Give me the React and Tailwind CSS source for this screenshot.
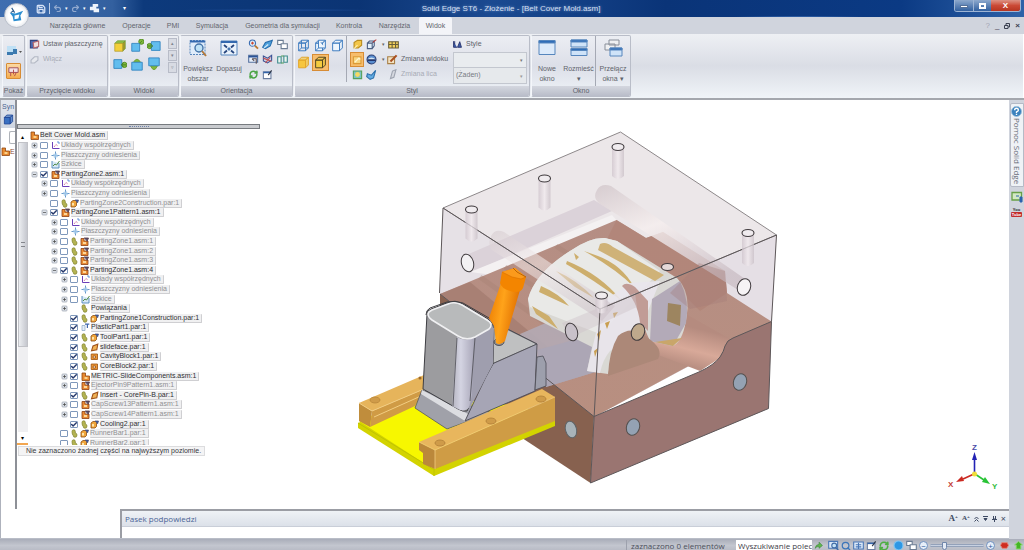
import React from 'react';
import { Check, Save, Undo2, Redo2, RefreshCw, Search } from 'lucide-react';

const INDENT = ['pl-[2px]', 'pl-[3px]', 'pl-[13px]', 'pl-[23px]', 'pl-[33px]'];

// level, label, expander, checkbox (null = none), icons, dimmed
const TREE = [
  [0, 'Belt Cover Mold.asm', '', null, ['asm'], false],
  [1, 'Układy współrzędnych', '+', false, ['axes'], true],
  [1, 'Płaszczyzny odniesienia', '+', false, ['plane'], true],
  [1, 'Szkice', '+', false, ['sketch'], true],
  [1, 'PartingZone2.asm:1', '-', true, ['sub'], false],
  [2, 'Układy współrzędnych', '+', false, ['axes'], true],
  [2, 'Płaszczyzny odniesienia', '+', false, ['plane'], true],
  [2, 'PartingZone2Construction.par:1', '', false, ['clip', 'part'], true],
  [2, 'PartingZone1Pattern1.asm:1', '-', true, ['sub'], false],
  [3, 'Układy współrzędnych', '+', false, ['axes'], true],
  [3, 'Płaszczyzny odniesienia', '+', false, ['plane'], true],
  [3, 'PartingZone1.asm:1', '+', false, ['clip', 'sub'], true],
  [3, 'PartingZone1.asm:2', '+', false, ['clip', 'sub'], true],
  [3, 'PartingZone1.asm:3', '+', false, ['clip', 'sub'], true],
  [3, 'PartingZone1.asm:4', '-', true, ['clip', 'sub'], false],
  [4, 'Układy współrzędnych', '+', false, ['axes'], true],
  [4, 'Płaszczyzny odniesienia', '+', false, ['plane'], true],
  [4, 'Szkice', '+', false, ['sketch'], true],
  [4, 'Powiązania', '+', null, ['clip'], false],
  [4, 'PartingZone1Construction.par:1', '', true, ['clip', 'part'], false],
  [4, 'PlasticPart1.par:1', '', true, ['plastic'], false],
  [4, 'ToolPart1.par:1', '', true, ['clip', 'part'], false],
  [4, 'slideface.par:1', '', true, ['clip', 'face'], false],
  [4, 'CavityBlock1.par:1', '', true, ['clip', 'block'], false],
  [4, 'CoreBlock2.par:1', '', true, ['clip', 'block'], false],
  [4, 'METRIC-SlideComponents.asm:1', '+', true, ['asm'], false],
  [4, 'EjectorPin9Pattern1.asm:1', '+', false, ['sub'], true],
  [4, 'Insert - CorePin-B.par:1', '', true, ['clip', 'face'], false],
  [4, 'CapScrew13Pattern1.asm:1', '+', false, ['sub'], true],
  [4, 'CapScrew14Pattern1.asm:1', '+', false, ['sub'], true],
  [4, 'Cooling2.par:1', '', true, ['clip', 'part'], false],
  [3, 'RunnerBar1.par:1', '', false, ['clip', 'part'], true],
  [3, 'RunnerBar2.par:1', '', false, ['clip', 'part'], true],
];

const TreeIcon = ({ type }) => {
  if (type === 'clip') {
    return (
      <svg viewBox="0 0 7 9" className="w-[7px] h-[9px] mr-[2px] shrink-0">
        <path d="M1 2.5Q1 .8 2.8.8Q4.3.8 4.3 2.5V4Q6 4.3 6 6Q6 8.3 4 8.3Q2.3 8.3 2.2 6.5L1.3 5Z" fill="#b4b452" stroke="#7c7e28" strokeWidth=".7" />
      </svg>
    );
  }
  return (
    <svg viewBox="0 0 9 9" className="w-[9px] h-[9px] shrink-0">
      {type === 'asm' && (
        <>
          <path d="M1 1H4.5V4H8.5V8.5H1Z" fill="#e8892e" stroke="#8f4611" strokeWidth=".8" />
          <path d="M3.5 5H6.5V7H3.5Z" fill="#fbd28a" />
        </>
      )}
      {type === 'sub' && (
        <>
          <path d="M1 1.5H4V4H8V8.5H1Z" fill="#ea8b34" stroke="#8c3f14" strokeWidth=".8" />
          <path d="M4 1H8.5L7 4.5" fill="#5a5672" stroke="#54303c" strokeWidth=".8" />
          <path d="M3 5H6V7H3Z" fill="#fcd79a" />
        </>
      )}
      {type === 'axes' && (
        <>
          <path d="M1.5 1V7.5H8.5" stroke="#6a3fb8" strokeWidth="1" fill="none" />
          <path d="M3 6L5 3.5L7 5" stroke="#c04b8a" strokeWidth=".8" fill="none" strokeDasharray="1.2 .6" />
          <path d="M6 1H8V3" stroke="#3c7ad0" strokeWidth=".8" fill="none" />
        </>
      )}
      {type === 'plane' && (
        <>
          <path d="M.5 4.5H8.5M4.5.5V8.5" stroke="#6597c9" strokeWidth="1" />
          <path d="M2 3L6 2.2L7 6L3 7Z" fill="#a9cdec" fillOpacity=".8" />
        </>
      )}
      {type === 'sketch' && (
        <>
          <path d="M1 1V8H8V3" fill="#d7e8f6" stroke="#4e87b8" strokeWidth=".9" />
          <path d="M2 6L4 4L5.5 5L8.5 1" stroke="#4f8a45" strokeWidth="1" fill="none" />
        </>
      )}
      {type === 'part' && (
        <>
          <path d="M1 3L3 1.5H6.5V6.5L5 8H1Z" fill="#f0a63c" stroke="#8a4d12" strokeWidth=".8" />
          <path d="M5 1H8.5L7.5 4" fill="#465ea0" stroke="#3b4778" strokeWidth=".7" />
          <path d="M2 4H4V6.5H2Z" fill="#fde3ac" />
        </>
      )}
      {type === 'plastic' && (
        <>
          <path d="M1 2.5H4V7.5H1Z" fill="#e4eef8" stroke="#8aa5c4" strokeWidth=".7" />
          <path d="M4 1.2H8.3M6.4 1.2V5" stroke="#4168ad" strokeWidth="1.2" />
        </>
      )}
      {type === 'face' && <path d="M1.5 7.8L3 3L7.8 1.2L6.8 6.8Z" fill="#f2b355" stroke="#a0541c" strokeWidth="1.1" />}
      {type === 'block' && <path d="M1.2 2H7.5V7.5H1.2ZM3.2 4V6H5.5V4Z" fill="#eb9636" fillRule="evenodd" stroke="#9a5212" strokeWidth=".8" />}
    </svg>
  );
};

const TreeRow = ({ row }) => {
  const [level, label, expander, checked, icons, dim] = row;
  return (
    <li className={`flex flex-1 min-h-0 items-center ${INDENT[level]}`}>
      {level > 0 && (
        <span className="w-[9px] shrink-0 flex">
          {expander && (
            <button aria-label={expander === '+' ? 'Rozwiń' : 'Zwiń'} className="w-[7px] h-[7px]">
              <svg viewBox="0 0 7 7" className="w-full h-full">
                <rect x="1" y="1" width="5" height="5" rx=".8" fill="#dfe3ea" stroke="#9aa0ad" strokeWidth=".7" />
                <path d={expander === '+' ? 'M2 3.5H5M3.5 2V5' : 'M2 3.5H5'} stroke="#444" strokeWidth=".7" />
              </svg>
            </button>
          )}
        </span>
      )}
      <label className="flex items-center whitespace-nowrap">
        {level > 0 && (
          <span className="relative w-[11px] h-[7px] shrink-0 flex">
            {checked !== null && (
              <>
                <input type="checkbox" defaultChecked={checked} className="peer appearance-none w-[8px] h-[7px] border border-[#7f98bb] bg-white rounded-[1px]" />
                <Check strokeWidth={5} className="hidden peer-checked:block absolute left-0 top-0 w-[8px] h-[7px] text-[#26396b] pointer-events-none" />
              </>
            )}
          </span>
        )}
        {icons.map((t) => <TreeIcon key={t} type={t} />)}
        <span className={`ml-px pr-[2px] leading-[8px] rounded-[1px] border-b border-r border-[#cfcfd2] bg-[#f0f0f1] ${dim ? 'text-[#8f8f92]' : 'text-[#2f2f33]'}`}>
          {label}
        </span>
      </label>
    </li>
  );
};

// Small ribbon pictures on a 16x16 grid
const Cube = ({ fill = 'none', stroke = '#3f7cc0', hidden = false, className = 'w-[13px] h-[13px]' }) => (
  <svg viewBox="0 0 16 16" className={className} fill={fill} stroke={stroke} strokeWidth="1.2">
    <path d="M2 5H10.5V14.5H2Z" />
    <path d="M2 5L5.5 1.5H14L10.5 5Z" fillOpacity=".6" />
    <path d="M10.5 5L14 1.5V11L10.5 14.5Z" fillOpacity=".75" />
    {hidden && <path d="M5.5 1.5V11H14M5.5 11L2 14.5" />}
  </svg>
);

const ViewIcon = ({ dir }) => {
  const dots = { top: [13, 3], left: [3, 8], right: [13, 9], up: [8, 3], down: [8, 13] };
  if (dir === 'iso') {
    return (
      <svg viewBox="0 0 16 16" className="w-[14px] h-[14px]">
        <path d="M2 5L5 2H14L11 5Z" fill="#8fc04a" stroke="#6c9a38" strokeWidth=".8" />
        <path d="M11 5L14 2V11L11 14Z" fill="#a39a2c" stroke="#6c9a38" strokeWidth=".8" />
        <path d="M2 5H11V14H2Z" fill="#f3cf3a" stroke="#b09a26" strokeWidth=".8" />
      </svg>
    );
  }
  const [x, y] = dots[dir];
  return (
    <svg viewBox="0 0 16 16" className="w-[14px] h-[14px]">
      {dir !== 'up' && dir !== 'down' && <circle cx={x} cy={y} r="3" fill="#80b83c" stroke="#4e8a21" />}
      {(dir === 'up' || dir === 'down') && <path d={dir === 'up' ? 'M4 6Q8-1 12 6Z' : 'M4 10Q8 19 12 10Z'} fill="#80b83c" stroke="#6f9e30" />}
      <path
        d={{ top: 'M2 5H11V14H2Z', left: 'M5 3H15V13H5Z', right: 'M1 3H10V13H1Z', up: 'M2 6H14V15H2Z', down: 'M2 1H14V10H2Z' }[dir]}
        fill="#62bdee" stroke="#3183c0" strokeWidth="1"
      />
      {dir === 'top' && <path d="M11 5L14 2" stroke="#4e8a21" />}
      {dir === 'left' && <path d="M1 8H6M4 5.5L6.5 8L4 10.5" stroke="#437c1c" fill="none" />}
      {dir === 'right' && <path d="M15 9H10M12 6.5L9.5 9L12 11.5" stroke="#437c1c" fill="none" />}
    </svg>
  );
};

const MiniIcon = ({ type, className = 'w-[11px] h-[11px]' }) => (
  <svg viewBox="0 0 16 16" className={className} fill="none" strokeWidth="1.6">
    {type === 'zoom' && <><circle cx="6.5" cy="6" r="4.5" fill="#d9ecfb" stroke="#3c6eb2" /><path d="M10 9.5L14.5 14" stroke="#b9762d" strokeWidth="2.6" /><path d="M4.5 6H8.5M6.5 4V8" stroke="#cf4630" /></>}
    {type === 'pan' && <><path d="M1 12L5 5L15 2L12 10L5 14Z" fill="#4fa2de" stroke="#286ead" /><path d="M3 13L9 8" stroke="#d9edf9" /></>}
    {type === 'windows' && <><path d="M1 2H9V8H1Z" fill="#fff" stroke="#6b7c93" /><path d="M6 7H15V14H6Z" fill="#fff" stroke="#6b7c93" /></>}
    {type === 'prev' && <><path d="M1 2H14V12H1Z" fill="#e8f0fa" stroke="#55719f" /><path d="M1 4H14" stroke="#2a5398" strokeWidth="2" /><path d="M6 7H12V14M6 7L9 10" stroke="#5a4f55" /></>}
    {type === 'lens' && <><path d="M1 2H14V12H1Z" fill="#dce9f8" stroke="#4977b7" /><circle cx="9" cy="8" r="3.5" fill="#c4e1f6" stroke="#3f6ba5" /><path d="M11.5 11L15 15" stroke="#3f6ba5" strokeWidth="2" /></>}
    {type === 'turn' && <><path d="M2 3L8 6L14 2V9L8 13L2 10Z" fill="#cfd5e6" stroke="#3c5396" /><path d="M2 6L14 11M5 13L12 5" stroke="#c15256" /></>}
    {type === 'rotate' && <><path d="M1 4H6V13H1ZM10 3H15V12H10Z" fill="#eaf5ef" stroke="#3e8b8d" /><path d="M6 3H10M6 13H10" stroke="#4f9b57" /></>}
    {type === 'table' && <><path d="M2 4H13V14H2Z" fill="#fff" stroke="#6c7ea0" /><path d="M2 5H13" stroke="#3465aa" strokeWidth="2" /><path d="M9 9L14 2" stroke="#2f3646" /></>}
    {type === 'gold' && <><path d="M3 5L8 2H14V9L9 13H3Z" fill="#f3c64a" stroke="#b98c1e" /><path d="M3 14L8 9" stroke="#fff0b4" /></>}
    {type === 'goldface' && <><path d="M2 4H13V14H2Z" fill="#f7d582" stroke="#dc9a37" /><path d="M4 12L10 6L12 8" stroke="#fff5d0" strokeWidth="2" /></>}
    {type === 'edges' && <><path d="M2 6H9V14H2ZM2 6L5 3H12M9 6L12 3V10L9 14" fill="#e2effa" stroke="#4c5f83" /><path d="M10 5L15 1" stroke="#bc3c37" /></>}
    {type === 'globe' && <><circle cx="8" cy="8" r="6.5" fill="#5a8ed0" stroke="#2a3f75" /><path d="M2 8Q8 12 14 8Q8 2 2 8" fill="#d3e5f4" /><path d="M2 9H14" stroke="#23366c" strokeWidth="2.4" /></>}
    {type === 'grid' && <><path d="M1 4H15V13H1Z" fill="#f6d35c" stroke="#695f3b" /><path d="M1 8H15M6 4V13M11 4V13" stroke="#695f3b" /></>}
    {type === 'brush' && <><path d="M1 4H11V14H1Z" fill="#f2e3c4" stroke="#a98048" /><path d="M5 11L14 2" stroke="#a94f1f" strokeWidth="3" /></>}
    {type === 'greybrush' && <path d="M5 14L8 3L13 1L10 12Z" fill="#d5d8df" stroke="#9ea4b0" />}
    {type === 'greencube' && <><path d="M2 3H14V14H2Z" fill="#7ac3c4" stroke="#55a05b" /><circle cx="8" cy="8" r="3.5" fill="#f5d960" /></>}
    {type === 'bluebrush' && <path d="M2 7L8 9L14 2L11 13L6 15L1 11Z" fill="#63ace2" stroke="#2d70ac" />}
    {type === 'plane' && <><path d="M2 2H12V13H2Z" fill="#4b67ae" stroke="#31427e" /><path d="M6 5L14 3V11L7 13Z" fill="#f0dede" stroke="#b5656b" /></>}
    {type === 'greyplane' && <path d="M3 9L8 4H13V9L8 13H3Z" fill="#e6e8ed" stroke="#b3b8c4" />}
    {type === 'style' && <><path d="M1 2V13H7M12 3L8 13H15Z" fill="#3d5ba5" stroke="#28336d" /><path d="M3 2V8" stroke="#28336d" /></>}
    {type === 'ball' && <circle cx="8" cy="8" r="6.5" fill="#2e97e4" stroke="#7cc5f4" />}
    {type === 'red' && <path d="M3 3L13 3L15 8L12 13H4L1 8Z" fill="#cf2d20" stroke="#e28377" />}
    {type === 'green' && <path d="M8 1L15 7H12V14H4V7H1Z" fill="#44b526" stroke="#86d665" />}
    {type === 'sheet' && <><path d="M1 3H15V13H1Z" fill="#dce9f8" stroke="#4977b7" /><path d="M4 7H12M4 10H12M8 4V13" stroke="#4977b7" /></>}
    {type === 'arrow' && <path d="M2 13Q3 6 9 6V2L15 8L9 13V10Q5 9 2 13Z" fill="#60b64d" stroke="#36833a" strokeWidth="1" />}
  </svg>
);

const WindowIcon = ({ type }) => (
  <svg viewBox="0 0 20 18" className="w-[20px] h-[18px] shrink-0" stroke="#5686bd">
    {type === 'one' && <><path d="M2 1.5H18V15.5H2Z" fill="#dceafa" /><path d="M2 1.5H18V4H2Z" fill="#2f6db8" /></>}
    {type === 'split' && <><path d="M2 1H18V8H2ZM2 9.5H18V16.5H2Z" fill="#cfe3f8" /><path d="M2 1H18V3H2ZM2 9.5H18V11.5H2Z" fill="#2f6db8" /></>}
    {type === 'stack' && <><path d="M6 1H16V6H6ZM2 5H12V11H2Z" fill="#eff0f2" stroke="#888e99" /><path d="M7 9H19V17H7Z" fill="#cfe3f8" /><path d="M7 9H19V11H7Z" fill="#2f6db8" /></>}
    {type === 'area' && <><path d="M2 1.5H17V15.5H2Z" fill="#dfecfa" strokeDasharray="2 1" /><path d="M2 2.5H17" stroke="#3469af" strokeWidth="2" /><circle cx="11" cy="9" r="4" fill="#bfe2f6" stroke="#4473a8" strokeWidth="1.4" /><path d="M14 12L18 17" stroke="#b37a3d" strokeWidth="2" /></>}
    {type === 'fit' && <><path d="M2 2H18V16H2Z" fill="#eaf2fb" /><path d="M2 3H18" stroke="#3469af" strokeWidth="2" /><path d="M5 6L8 8.500M15 6L12 8.500M5 14L8 11.500M15 14L12 11.500" stroke="#27467e" strokeWidth="1.8" /><path d="M9 9H11V11H9Z" fill="#27467e" /></>}
  </svg>
);

const Group = ({ title, className, children }) => (
  <section className={`flex flex-col shrink-0 rounded-[2px] border border-[#b9bdc8] border-l-[#f4f6fa] overflow-hidden bg-linear-to-b from-[#eceef3] via-[#dcdfe8] to-[#eff3f7] ${className}`}>
    <div className="flex flex-1 min-h-0">{children}</div>
    <h2 className="h-[10px] leading-[9px] text-center whitespace-nowrap text-[#60636c] bg-linear-to-b from-[#d4d7df] to-[#b9bdc9]">{title}</h2>
  </section>
);

const BigButton = ({ icon, lines, className }) => (
  <button className={`flex flex-col items-center pt-[3px] leading-[10px] text-[#60636b] whitespace-nowrap ${className}`}>
    <WindowIcon type={icon} />
    <span className="mt-[7px]">{lines[0]}</span>
    <span>{lines[1]}</span>
  </button>
);

const IconButton = ({ label, className = '', children }) => (
  <button aria-label={label} className={`flex items-center justify-center ${className}`}>{children}</button>
);

const Ribbon = () => (
  <div className="flex h-[64px] gap-px pl-[2px] py-px pr-1 border-r border-white bg-linear-to-b from-[#eef0f4] via-[#dadde5] to-[#f0f4f8]">
    <Group title="Pokaż" className="w-[23px]">
      <div className="flex flex-col items-center gap-1 w-full pt-[7px]">
        <IconButton label="Pokaż" className="w-[18px] h-[16px]">
          <svg viewBox="0 0 18 14" className="w-[18px] h-[14px]">
            <path d="M2 2H11V9H2Z" fill="#bfe0f5" /><path d="M2 8H8V11H2ZM8 5H12V10H8Z" fill="#3c7ab0" /><path d="M14 7H17L15.500 9Z" fill="#555" />
          </svg>
        </IconButton>
        <IconButton label="Etykiety" className="w-[15px] h-[16px] rounded-[1px] border border-[#d78c35] bg-linear-to-b from-[#fbd9a3] to-[#f5ad4e]">
          <svg viewBox="0 0 14 14" className="w-[13px] h-[13px]">
            <path d="M2 3H12V8H2Z" fill="#f4e1e4" stroke="#9c4c58" /><path d="M4 8V12M7 5V10M10 8L8 12" stroke="#b34848" fill="none" />
          </svg>
        </IconButton>
      </div>
    </Group>
    <Group title="Przycięcie widoku" className="w-[82px]">
      <div className="flex flex-col gap-1 pl-[2px] pt-[3px]">
        <button className="flex items-center gap-[3px] h-[11px] text-[#60636b] whitespace-nowrap"><MiniIcon type="plane" />Ustaw płaszczyznę</button>
        <button className="flex items-center gap-[3px] h-[11px] text-[#a7abb5]"><MiniIcon type="greyplane" />Włącz</button>
      </div>
    </Group>
    <Group title="Widoki" className="w-[70px]">
      <div className="grid grid-cols-3 grid-rows-2 w-[52px] h-[36px] mt-px ml-px">
        {['iso', 'top', 'left', 'right', 'up', 'down'].map((d) => (
          <IconButton key={d} label={`Widok ${d}`}><ViewIcon dir={d} /></IconButton>
        ))}
      </div>
      <div className="ml-auto mr-px mt-[2px] flex flex-col w-[9px] h-[32px] gap-px text-[5px] text-[#80848f]">
        {['▴', '▾', '▿'].map((s) => (
          <button key={s} aria-label="Przewiń widoki" className="flex-1 leading-[9px] border border-[#b8bcc8] bg-[#d8dbe3]">{s}</button>
        ))}
      </div>
    </Group>
    <Group title="Orientacja" className="w-[113px]">
      <BigButton icon="area" lines={['Powiększ', 'obszar']} className="w-[34px]" />
      <BigButton icon="fit" lines={['Dopasuj', '']} className="w-[28px]" />
      <div className="grid grid-cols-3 auto-rows-[15px] w-[44px] ml-[3px] pt-px">
        {['zoom', 'pan', 'windows', 'prev', 'turn', 'rotate'].map((t) => (
          <IconButton key={t} label={t}><MiniIcon type={t} /></IconButton>
        ))}
        <IconButton label="Obrót"><RefreshCw strokeWidth={4} className="w-[9px] h-[9px] text-[#4ba445]" /></IconButton>
        <IconButton label="Widoki nazwane"><MiniIcon type="table" /></IconButton>
      </div>
    </Group>
    <Group title="Styl" className="w-[236px]">
      <div className="grid grid-cols-3 auto-rows-[17px] w-[52px] pt-px border-r border-[#a5a9b4] mb-1">
        <IconButton label="Krawędzie"><Cube hidden /></IconButton>
        <IconButton label="Niewidoczne krawędzie"><Cube hidden fill="#eef6fd" /></IconButton>
        <IconButton label="Widoczne krawędzie"><Cube fill="#eef6fd" /></IconButton>
        <IconButton label="Cieniowany"><Cube fill="#f7c63e" stroke="#e2a62b" /></IconButton>
        <IconButton label="Cieniowany z krawędziami" className="border border-[#d78c35] bg-[#f7bd6c]"><Cube fill="#f3cb3f" stroke="#514622" /></IconButton>
      </div>
      <div className="grid grid-cols-[14px_14px_9px] auto-rows-[15px] pt-px pl-[3px]">
        <IconButton label="Tekstury"><MiniIcon type="gold" /></IconButton>
        <IconButton label="Krawędzie modelu"><MiniIcon type="edges" /></IconButton>
        <span className="pl-[4px] text-[5px] leading-[15px] text-[#666]">▾</span>
        <IconButton label="Odbicia" className="border border-[#d78c35] bg-[#f7bd6c]"><MiniIcon type="goldface" /></IconButton>
        <IconButton label="Tło"><MiniIcon type="globe" /></IconButton>
        <span className="pl-[4px] text-[5px] leading-[15px] text-[#666]">▾</span>
        <IconButton label="Cienie"><MiniIcon type="greencube" /></IconButton>
        <IconButton label="Pędzel"><MiniIcon type="bluebrush" /></IconButton>
      </div>
      <div className="flex flex-col pt-px whitespace-nowrap">
        <IconButton label="Siatka" className="w-[13px] h-[15px]"><MiniIcon type="grid" /></IconButton>
        <button className="flex items-center gap-[3px] h-[15px] text-[#60636b]"><MiniIcon type="brush" />Zmiana widoku</button>
        <button className="flex items-center gap-[3px] h-[15px] text-[#a7abb5]"><MiniIcon type="greybrush" />Zmiana lica</button>
      </div>
      <div className="flex flex-col ml-auto mr-[2px] w-[74px] pt-px">
        <label htmlFor="style" className="flex items-center gap-[4px] h-[15px] text-[#60636b]"><MiniIcon type="style" className="w-[9px] h-[9px]" />Style</label>
        <div className="relative">
          <select id="style" className="appearance-none block w-full h-[16px] px-[2px] border border-[#c3c7cf] bg-[#e9ecef]"><option></option></select>
          <span className="absolute right-1 top-0 text-[5px] leading-[16px] text-[#777] pointer-events-none">▾</span>
        </div>
        <div className="relative">
          <select aria-label="Styl lica" className="appearance-none block w-full h-[16px] px-[2px] border border-t-0 border-[#c3c7cf] bg-[#e6e9ec] text-[#777a82]"><option>(Żaden)</option></select>
          <span className="absolute right-1 top-0 text-[5px] leading-[16px] text-[#999] pointer-events-none">▾</span>
        </div>
      </div>
    </Group>
    <Group title="Okno" className="w-[100px]">
      <BigButton icon="one" lines={['Nowe', 'okno']} className="w-[30px]" />
      <BigButton icon="split" lines={['Rozmieść', '▾']} className="w-[34px] border-r border-[#a5a9b4]" />
      <BigButton icon="stack" lines={['Przełącz', 'okna ▾']} className="w-[34px]" />
    </Group>
  </div>
);

const Hole = ({ x, y, rx = 6, ry = 3.5, len = 0 }) => (
  <g>
    {len > 0 && <path d={`M${x - rx} ${y}V${y + len}Q${x} ${y + len + 6} ${x + rx} ${y + len}V${y}Z`} fill="url(#pin)" opacity=".75" />}
    <ellipse cx={x} cy={y} rx={rx} ry={ry} fill="#f1eef0" fillOpacity=".8" stroke="#403b3e" strokeWidth="1.1" />
  </g>
);

const MoldModel = () => (
  <svg viewBox="260 99 749 409" className="block flex-1 min-w-0 h-full" preserveAspectRatio="xMidYMin meet">
    <defs>
      <linearGradient id="pin"><stop offset="0" stopColor="#cfc4cc" /><stop offset=".5" stopColor="#f1eaee" /><stop offset="1" stopColor="#c9bfc6" /></linearGradient>
      <linearGradient id="tube" x1="0" y1="0" x2=".5" y2="1"><stop offset="0" stopColor="#d3c8cc" /><stop offset=".45" stopColor="#f5eeee" /><stop offset="1" stopColor="#cdc1c8" /></linearGradient>
      <linearGradient id="orange" x1="0" x2="1" y1="0" y2=".3"><stop offset="0" stopColor="#e97800" /><stop offset=".5" stopColor="#ffa31a" /><stop offset="1" stopColor="#e06f00" /></linearGradient>
      <linearGradient id="head"><stop offset="0" stopColor="#b4b3bf" /><stop offset=".4" stopColor="#d4d4e2" /><stop offset="1" stopColor="#a9a7b9" /></linearGradient>
      <linearGradient id="dip" x1="0" y1="0" x2="-.4" y2="1"><stop offset="0" stopColor="#b58b7f" /><stop offset=".35" stopColor="#d8a999" /><stop offset=".6" stopColor="#b98f82" /><stop offset=".8" stopColor="#dcae9f" /><stop offset="1" stopColor="#b48a7d" /></linearGradient>
      <linearGradient id="brown" x1="0" y1="0" x2="0" y2="1"><stop offset="0" stopColor="#b58e84" /><stop offset="1" stopColor="#b88f80" /></linearGradient>
    </defs>

    {/* upper plate, glassy */}
    <path d="M620.500 131L776.500 234L771.500 321L594 416L440 293L443 207Z" fill="#ece7e9" />
    <path d="M443 207L600 308L594 416L440 293Z" fill="#e6e1e6" />
    <path d="M600 308L776.500 234L771.500 321L594 416Z" fill="#e5dfe5" />

    {/* cooling channels behind the cavity */}
    <path d="M464 255L594 199L612 210L470 272Z" fill="#dbd2d9" />
    <path d="M470 271L612 214L618 221L500 275Z" fill="#f4f1f2" />

    {/* lower plate */}
    <path d="M440 293L616.500 219L646 237L663 231L725 270L727 292L771.500 320.500L594 416Z" fill="url(#brown)" />
    <path d="M440 293L470 281L560 356L547 387Z" fill="#9f766a" opacity=".6" />
    <path d="M556 245L640 300M480 276L570 340M505 266L600 330" stroke="#a58073" strokeWidth="5" opacity=".35" />
    <path d="M616.500 219L646 237L663 231L725 270L727 292L700 310L650 260L600 252Z" fill="#b28578" opacity=".8" />
    <path d="M686 313L730 338L720 357L700 370L640 347Z" fill="url(#dip)" />
    <path d="M440 293L594 415.500L590.500 482L440 383Z" fill="#87614f" />
    <path d="M594 415.500L700 370.500Q714 364 720 356Q724 350 725 345Q727 339 733 337L771.500 320.500L768.500 407.500L590.500 482Z" fill="#9a7571" />

    {/* translucent slide body */}
    <path d="M520 333L562 315L607 332L602 369L546 386Z" fill="#b3a9b3" opacity=".92" />
    <path d="M537 349L603 331L602 369L546 386Z" fill="#aaa6b7" opacity=".75" />

    {/* moulded part */}
    <path d="M528 298Q535 272 570 250Q590 236 605 237L617 240L677 277Q690 290 687 312Q684 340 673 345L650 340L642 322L626 338Q612 352 608 373L587 370L592 346L530 315Z" fill="#d9d8d4" />
    <path d="M528 298Q535 272 570 250Q590 236 605 237L617 240L660 270L600 333L530 306Z" fill="#e9e9e7" />
    <path d="M600 243Q606 240 613 246L664 274L655 280L598 249Z" fill="#cfb278" />
    <path d="M584 250L598 255Q622 264 634 286Q616 268 584 250ZM567 260Q600 273 622 300Q594 279 566 263ZM556 270Q577 279 594 297L575 286ZM541 285Q560 293 569 305L539 291ZM574 252L579 256L576 259ZM532 305L549 315L558 328L536 313Z" fill="#cdae6c" />
    <path d="M604 300L630 282L660 280L640 330L610 350Q603 358 600 372L587 370L594 340Z" fill="#e9e6ec" opacity=".9" />
    <path d="M597 333L601 329L599 340ZM605 322L610 320L607 328ZM613 312L618 311L614 317ZM594 350L598 347L595 356Z" fill="#c99f51" />
    <path d="M622 285Q626 280 635 286L648 300V330L640 322Q638 300 622 285Z" fill="#c19c96" />
    <path d="M652 298L680 280Q690 300 686 322L673 345L650 340Z" fill="#b3aab8" />
    <path d="M668 302L681 304L680 325L667 320Z" fill="#9d8560" />
    <path d="M655 341L682 337L673 345Z" fill="#c9a66a" />
    <path d="M618 335Q632 323 648 337Q664 348 658 358L608 375Q609 350 618 335Z" fill="#ac8878" />
    <path d="M562 322L635 292L637 306L570 337Z" fill="#cfc3ca" opacity=".45" />

    {/* long channels */}
    <path d="M597 189Q601 182 611 185L748 280Q752 287 743 292L600 203Q592 197 597 189Z" fill="url(#tube)" opacity=".85" />
    <path d="M491 235Q495 227 504 231L615 305L602 320L492 249Q487 243 491 235Z" fill="url(#tube)" opacity=".55" />
    <path d="M699 262L725 270L727 300L690 308L670 292Z" fill="#a27a78" opacity=".35" />

    <g stroke="#5d5759" strokeWidth="1" fill="none">
      <path d="M620.500 131L776.500 234L600 308L443 207Z" stroke="#8d888a" />
      <path d="M443 207L439.500 292M776.500 234L771.500 320.500L768.500 407.500L590.500 482L600 308" />
      <path d="M440 293L594 415.500L700 370.500Q714 364 720 356Q724 350 725 345Q727 339 733 337L771.500 320.500" />
      <path d="M443 207L600 308L776.500 234" />
    </g>

    <Hole x={618} y={146} len={29} />
    <Hole x={544.5} y={177.5} len={29} />
    <Hole x={471.5} y={208.5} len={29} />
    <Hole x={748} y={232} len={30} />
    <Hole x={667.5} y={266} />
    <Hole x={601.5} y={294.5} len={15} />
    <ellipse cx="467.500" cy="262" rx="6" ry="9" transform="rotate(-15 467.500 262)" fill="#f3f1f3" stroke="#403b3e" />
    <ellipse cx="744" cy="286" rx="6.500" ry="8.500" transform="rotate(20 744 286)" fill="#f6f3f5" stroke="#403b3e" />
    <ellipse cx="571.500" cy="331" rx="6" ry="9" transform="rotate(-15 571.500 331)" fill="#c8c1c9" stroke="#403b3e" />
    <ellipse cx="638" cy="331" rx="6.500" ry="8.500" transform="rotate(20 638 331)" fill="#bfa98c" stroke="#403b3e" />
    <ellipse cx="571" cy="428.500" rx="5.500" ry="8.500" transform="rotate(-15 571 428.500)" fill="#a8b3b9" stroke="#5e6468" />
    <ellipse cx="633" cy="426" rx="6.500" ry="8.500" transform="rotate(18 633 426)" fill="#94a2b3" stroke="#54504e" />
    <ellipse cx="740" cy="381" rx="6.500" ry="8.500" transform="rotate(18 740 381)" fill="#94a2b3" stroke="#54504e" />

    {/* ejector base plate */}
    <path d="M358 422L422 395L500 405L555 417V425L434 475L358 427Z" fill="#d3d300" />
    <path d="M359 420L420 394L520 405L555 417L433 468Z" fill="#f7f700" />
    <path d="M434 468V475M358 422L433 468L555 418" stroke="#c0c400" fill="none" />

    {/* rear rail */}
    <path d="M359 402L424 374L424 388L372 410Z" fill="#e6b45b" />
    <path d="M359 402L372 410L370 426L359 420Z" fill="#c08d3c" />
    <path d="M372 410L424 388L415 405L370 426Z" fill="#d09b45" />
    <path d="M374 416L421 395M359 402L372 410L424 388" stroke="#f2cd81" fill="none" />
    <ellipse cx="375" cy="399" rx="5" ry="3" fill="#cf9b49" stroke="#b9863a" strokeWidth=".8" />
    <circle cx="420" cy="377" r="1.500" fill="#9c692a" />

    {/* slide carrier */}
    <path d="M422 389L493 412L466 421L447 428L415 407Z" fill="#a0a1a9" stroke="#56575d" strokeWidth=".8" />
    <path d="M422 389L468 413L465 420L421 393Z" fill="#dcdde1" />
    <path d="M494 322L537 343L492 363L475 340Z" fill="#bfc0c1" stroke="#66666a" strokeWidth=".7" />
    <path d="M492 363L537 343L535 390L465 420Z" fill="#a6a5b5" stroke="#4d4d55" strokeWidth=".9" />
    <path d="M494 321L537 343" stroke="#4d4d55" />
    <path d="M537 356L543 355L546 362V385L535 389Z" fill="#9d9fac" stroke="#4d4d55" strokeWidth=".8" />
    <path d="M427 313Q426 310 431 308L447 302Q455 299 463 303L488 318Q494 322 494 328L493 363L467 410Q463 411 458 408L423 388Z" fill="#9c9c9f" stroke="#3e3e43" strokeWidth="1" />
    <path d="M457 336Q465 341 474 336V395Q470 412 460 409L452 405Z" fill="url(#head)" />
    <path d="M474 336L494 325L493 363L468 411L472 394Z" fill="#9f9eae" />
    <path d="M457 337L453 405M475 337L470 400" stroke="#4a4a50" strokeWidth=".8" />
    <path d="M428 313Q428 311 432 309L448 303Q455 300 462 304L487 319Q494 323 489 328L475 336Q466 340 458 335L432 319Q428 316 428 313Z" fill="#b8babb" stroke="#f0f0f2" strokeWidth="1.600" />
    <path d="M426 314Q426 309 430 307L447 301Q455 299 463 302L489 317Q495 321 494 327" stroke="#3f3f43" fill="none" />

    {/* angled pin */}
    <ellipse cx="499" cy="341" rx="5" ry="3.500" fill="#8b8b91" stroke="#3e3e43" strokeWidth=".8" />
    <path d="M501 282L520 289L505 340Q500 345 496 342L494 325L489 317Z" fill="url(#orange)" />
    <path d="M502 271L515 267L526 276L523 287Q520 293 510 290Q501 287 500 282Z" fill="#f38500" />
    <path d="M502 271L515 267L526 276L521 278L512 276Z" fill="#fb9a1c" />
    <path d="M502 271L512 276L521 278L526 276" stroke="#dd7300" strokeWidth=".7" fill="none" />
    <path d="M513 267L517 271L526 276" stroke="#a85500" strokeWidth=".8" fill="none" />

    {/* front rail */}
    <path d="M419 441L542 388L555 396L435 449Z" fill="#e8b65d" />
    <path d="M435 449L555 396V420L435 468Z" fill="#cf9c45" />
    <path d="M419 441L435 449V468L423 463V452L419 449Z" fill="#bb883b" />
    <path d="M419 441L435 449L555 396M435 449V468" stroke="#f2cd81" fill="none" strokeWidth=".8" />
    {[[440, 442], [491, 420], [541, 398]].map(([x, y]) => (
      <ellipse key={x} cx={x} cy={y} rx="5" ry="3" fill="#cf9b49" stroke="#b07f37" strokeWidth=".8" />
    ))}

    {/* axis triad */}
    <g strokeWidth="1.600" fontFamily="Liberation Sans, sans-serif" fontSize="8" fontWeight="bold">
      <path d="M974.500 472V458" stroke="#2222b4" /><path d="M974.500 451L977 459H972Z" fill="#2222b4" />
      <path d="M974 473L963 478" stroke="#cb2a22" /><path d="M956 481L962 475L964 480Z" fill="#cb2a22" />
      <path d="M975 473L984 479" stroke="#29c336" /><path d="M990 483L982 481L985 476Z" fill="#29c336" />
      <circle cx="974.500" cy="473" r="2.500" fill="#f1dc3b" />
      <text x="972" y="449" fill="#4a4aa8">Z</text>
      <text x="948" y="486" fill="#c33c34">X</text>
      <text x="992" y="488" fill="#34bd40">Y</text>
    </g>
  </svg>
);

const TreePanel = () => (
  <aside className="flex flex-col w-[245px] shrink-0 border-l-2 border-[#8d9097] bg-white text-[7px]">
    <div className="h-[24px] shrink-0" />
    <div className="h-[5px] shrink-0 flex justify-center items-center border border-[#777b80] bg-[#c9cbcf]">
      <span className="w-[20px] border-t border-dotted border-[#6f83ab]" />
    </div>
    <div className="flex h-[316px] shrink-0 pt-[2px] overflow-hidden">
      <div className="flex flex-col w-[11px] items-center text-[6px] leading-[10px]">
        <button aria-label="Przewiń w górę" className="h-[11px]">▴</button>
        <div className="w-[10px] h-[205px] flex items-center justify-center border border-[#c1c2c7] bg-linear-to-r from-[#eceef1] to-[#c5c7ce]">
          <span className="w-[4px] h-[5px] border-y border-[#84868c]" />
        </div>
        <div className="flex-1 w-[10px] bg-[#efeff1]" />
        <button aria-label="Przewiń w dół" className="h-[11px]">▾</button>
        <div className="w-[11px] h-[2px] bg-[#f2a650]" />
      </div>
      <ul className="flex flex-col h-[317px]">
        {TREE.map((row, i) => <TreeRow key={i} row={row} />)}
      </ul>
    </div>
    <p className="self-start ml-px mt-px pl-[7px] pr-[3px] leading-[8px] whitespace-nowrap border border-[#dcdcde] bg-[#f4f4f5] text-[#37373b]">
      Nie zaznaczono żadnej części na najwyższym poziomie.
    </p>
  </aside>
);

const TABS = [
  ['Narzędzia główne', 'ml-[41px] w-[73px]'],
  ['Operacje', 'w-[45px]'],
  ['PMI', 'w-[28px]'],
  ['Symulacja', 'w-[50px]'],
  ['Geometria dla symulacji', 'w-[91px]'],
  ['Kontrola', 'w-[42px]'],
  ['Narzędzia', 'w-[49px]'],
  ['Widok', 'w-[33px] bg-[#f3f4f8] rounded-t-[2px]'],
];

const TitleBar = () => (
  <header className="relative">
    <div className="flex h-[17px] text-white bg-[radial-gradient(ellipse_at_78%_100%,#3c6cb1_0,transparent_6%),radial-gradient(ellipse_at_27%_60%,#1c4a94_0,transparent_10%),linear-gradient(to_right,#3f6eb0_0%,#33609f_11%,#0d3a7c_14%,#0b3474_35%,#1b4a91_48%,#0a3478_65%,#0b3a84_88%,#2e62a8_100%)]">
      <nav className="flex items-center w-[118px] pl-[36px] gap-[3px]">
        <button aria-label="Zapisz"><Save strokeWidth={3} className="w-[10px] h-[10px] text-[#d8e4f8]" /></button>
        <span className="w-px h-[11px] bg-[#c0d0e8]" />
        <button aria-label="Cofnij"><Undo2 strokeWidth={3} className="w-[9px] h-[9px] text-[#91a9cf]" /></button>
        <span className="text-[5px]">▾</span>
        <button aria-label="Ponów"><Redo2 strokeWidth={3} className="w-[9px] h-[9px] text-[#91a9cf]" /></button>
        <span className="text-[5px]">▾</span>
        <button aria-label="Otwórz">
          <svg viewBox="0 0 12 12" className="w-[11px] h-[11px]"><path d="M4 1H10V4H8V6H11V10H5V8H1V4H4Z" fill="#eef4fb" /></svg>
        </button>
        <span className="text-[5px]">▾</span>
      </nav>
      <span className="text-[6px] leading-[17px] ml-[5px]">▾</span>
      <h1 className="flex-1 pr-[58px] text-center text-[8px] leading-[17px] text-[#d3dff0] [text-shadow:0_0_3px_#7fa0d0]">
        Solid Edge ST6 - Złożenie - [Belt Cover Mold.asm]
      </h1>
      <div className="flex w-[67px] h-[12px] mr-[3px] rounded-b-[3px] overflow-hidden border border-t-0 border-[#9db4d4]">
        <button aria-label="Minimalizuj" className="flex w-[18px] items-end justify-center pb-[3px] bg-linear-to-b from-[#8ea9cd] to-[#31609f]"><span className="w-[8px] h-[3px] bg-white border border-[#54719b]" /></button>
        <button aria-label="Maksymalizuj" className="flex w-[18px] items-center justify-center border-l border-[#9db4d4] bg-linear-to-b from-[#8ea9cd] to-[#31609f]"><span className="w-[7px] h-[6px] border-2 border-white" /></button>
        <button aria-label="Zamknij" className="flex-1 text-[8px] leading-[10px] font-bold bg-linear-to-b from-[#dc9284] via-[#cb4a36] to-[#b63520]">X</button>
      </div>
    </div>
    <div className="flex h-[17px] bg-[#d0d4dd] text-[#62656d]">
      {TABS.map(([label, cls]) => (
        <button key={label} className={`shrink-0 whitespace-nowrap text-center leading-[17px] ${cls}`}>{label}</button>
      ))}
      <div className="flex items-center gap-[5px] ml-auto pr-[4px] text-[8px] text-[#3b4050]">
        <button aria-label="Pomoc" className="text-[#a2a5b4]">?</button>
        <button aria-label="Minimalizuj dokument">_</button>
        <button aria-label="Przywróć dokument">
          <svg viewBox="0 0 6 6" className="w-[6px] h-[6px]" fill="none" stroke="#3b4050"><path d="M2 2V.5H5.500V4H4M.5 2.500H4V5.500H.5Z" /></svg>
        </button>
        <button aria-label="Zamknij dokument" className="font-bold">×</button>
      </div>
    </div>
    <button aria-label="Menu aplikacji" className="absolute left-[4px] top-[3px] w-[25px] h-[25px] rounded-full border border-[#b9bfca] bg-radial from-white from-50% to-[#cdd2dc]">
      <svg viewBox="0 0 24 24" className="w-full h-full">
        <path d="M5 9L11 10L19 7L16 12L17 17L9 18L8 13Z" fill="#2d8ed0" />
        <path d="M10 12L15 11L14 15L10 16Z" fill="#fff" />
        <path d="M7 4L10 9M9 7L6 9" stroke="#28598c" strokeWidth="1.200" />
      </svg>
    </button>
  </header>
);

const StatusBar = () => (
  <footer className="flex items-center h-[13px] shrink-0 font-['Open_Sans',sans-serif] text-[8px] bg-linear-to-b from-[#a9adb9] via-[#c3c6cf] to-[#b4b7c2] text-[#4c505b]">
    <span className="ml-auto w-[110px] pl-[4px] border-l border-[#9da1ad] leading-[12px] whitespace-nowrap">zaznaczono 0 elementów</span>
    <input aria-label="Wyszukiwanie poleceń" defaultValue="Wyszukiwanie poleceń" className="w-[76px] h-[12px] pl-[2px] bg-white text-[#3d4048] outline-none" />
    <div className="flex items-center gap-[2px] pl-[2px]">
      <IconButton label="Uruchom"><MiniIcon type="arrow" className="w-[9px] h-[9px]" /></IconButton>
      <IconButton label="Obszar" className="ml-[3px]"><MiniIcon type="lens" /></IconButton>
      <IconButton label="Powiększenie"><Search strokeWidth={3} className="w-[10px] h-[10px] text-[#3d76ba]" /></IconButton>
      <IconButton label="Dopasuj"><MiniIcon type="sheet" /></IconButton>
      <IconButton label="Przesuń"><MiniIcon type="table" /></IconButton>
      <IconButton label="Obróć"><RefreshCw strokeWidth={4} className="w-[10px] h-[10px] text-[#4eaf43]" /></IconButton>
      <IconButton label="Widok wspólny" className="ml-[2px]"><MiniIcon type="ball" /></IconButton>
      <IconButton label="Style widoku"><MiniIcon type="windows" /></IconButton>
      <button aria-label="Pomniejsz" className="w-[9px] h-[9px] rounded-full border border-[#6f8fbd] bg-[#e6eef8] leading-[6px] text-[#2b5796]">−</button>
      <input type="range" aria-label="Powiększenie widoku" defaultValue="25" className="appearance-none w-[54px] h-[3px] rounded bg-[#c7d1e2] border-y border-[#93a1b9] [&::-webkit-slider-thumb]:appearance-none [&::-webkit-slider-thumb]:w-[5px] [&::-webkit-slider-thumb]:h-[8px] [&::-webkit-slider-thumb]:rounded-b-[3px] [&::-webkit-slider-thumb]:border [&::-webkit-slider-thumb]:border-[#6f86ab] [&::-webkit-slider-thumb]:bg-[#e5ebf5]" />
      <button aria-label="Powiększ" className="w-[9px] h-[9px] rounded-full border border-[#6f8fbd] bg-[#e6eef8] leading-[6px] text-[#2b5796]">+</button>
      <IconButton label="Nagraj" className="ml-[3px]"><MiniIcon type="red" className="w-[9px] h-[9px]" /></IconButton>
      <IconButton label="Prześlij" className="ml-[3px] mr-px"><MiniIcon type="green" className="w-[9px] h-[9px]" /></IconButton>
    </div>
  </footer>
);

const App = () => {
  return (
    <div className="flex flex-col min-h-screen overflow-hidden bg-[#d0d4dd] font-['Liberation_Sans',sans-serif] text-[7px]">
      <TitleBar />
      <Ribbon />
      <div className="flex flex-1 border-t-2 border-[#a4a7ad]">
        <div className="flex flex-col flex-1 min-w-0">
          <div className="flex flex-1 bg-white">
            {/* collapsed docking pane */}
            <div className="w-[15px] shrink-0 border-l border-[#aeb2bc]">
              <div className="h-[28px] bg-linear-to-b from-[#e4e8ef] to-[#cfd6e2] text-[#4b6390]">
                <div className="pl-px leading-[14px]">Syn</div>
                <Cube fill="#3970c2" stroke="#1f4795" className="w-[11px] h-[11px] ml-[2px]" />
              </div>
              <div className="ml-[8px] mt-[3px] w-[6px] h-[13px] rounded-l-[2px] border border-r-0 border-[#aeb2b8]" />
              <div className="mt-[3px] flex"><TreeIcon type="asm" /><span className="leading-[9px] text-[#8d4b35]">E</span></div>
            </div>
            <TreePanel />
            <MoldModel />
          </div>
          <div className="flex h-[30px] shrink-0 bg-white border-b border-[#b9bdc7]">
            <div className="w-[120px] shrink-0 border-l border-[#aeb2bc]" />
            <div className="flex-1 border-t-2 border-l-2 border-[#9b9da4]">
              <div className="flex items-center h-[16px] px-[3px] border-b border-[#c9ced8] bg-linear-to-b from-[#eff2f6] to-[#dce1e9] font-['Open_Sans',sans-serif] text-[8px] text-[#4a6496]">
                <span>Pasek podpowiedzi</span>
                <div className="flex items-center gap-[4px] ml-auto text-[#3e4a63]">
                  <button aria-label="Większa czcionka" className="font-['Liberation_Serif',serif] font-bold text-[9px]">A<sup className="text-[5px]">+</sup></button>
                  <button aria-label="Mniejsza czcionka" className="font-['Liberation_Serif',serif] font-bold text-[7px]">A<sup className="text-[5px]">+</sup></button>
                  <button aria-label="W górę" className="w-[5px]">
                    <svg viewBox="0 0 5 6" className="w-[5px] h-[6px]" stroke="#3e4a63" fill="none"><path d="M.5 3L2.500 1L4.500 3M.5 5.500L2.500 3.500L4.500 5.500" /></svg>
                  </button>
                  <button aria-label="W dół" className="w-[5px]">
                    <svg viewBox="0 0 5 6" className="w-[5px] h-[6px]" stroke="#3e4a63" fill="#3e4a63"><path d="M0 .5H5M1 2.500H4L2.500 4.500Z" /></svg>
                  </button>
                  <button aria-label="Przypnij" className="w-[5px]">
                    <svg viewBox="0 0 5 6" className="w-[5px] h-[6px]" stroke="#3e4a63" fill="none"><path d="M1.500 0V3H3.500V0M0 3.500H5M2.500 3.500V6" /></svg>
                  </button>
                  <button aria-label="Zamknij pasek" className="text-[9px]">×</button>
                </div>
              </div>
            </div>
          </div>
        </div>
        <aside className="flex flex-col items-center w-[15px] shrink-0 gap-[4px] pt-[3px] bg-[#d0d4dd]">
          <button className="flex flex-col items-center w-[14px] gap-px py-[2px] rounded-l-[2px] border border-[#b5bac6] bg-[#eff2f6] text-[#686d78]">
            <svg viewBox="0 0 12 12" className="w-[11px] h-[11px] shrink-0">
              <circle cx="6" cy="6" r="5.500" fill="#3b82be" stroke="#9cc1dd" />
              <path d="M4 4.500Q4 2.500 6 2.500Q8 2.500 8 4.500Q8 5.500 6 6.500V7.500M6 8.500V9.800" stroke="#fff" strokeWidth="1.500" fill="none" />
            </svg>
            <span className="[writing-mode:vertical-rl] whitespace-nowrap font-['Open_Sans',sans-serif] text-[8px] leading-[10px]">Pomoc Solid Edge</span>
          </button>
          <IconButton label="Społeczność">
            <svg viewBox="0 0 12 12" className="w-[12px] h-[12px]"><path d="M1 1.500H10.500V9H1Z" fill="#d3e9c4" stroke="#67a047" strokeWidth="1.300" /><path d="M5 5H8M9 6H11V11H9Z" stroke="#2a62ae" fill="#2a62ae" /></svg>
          </IconButton>
          <button aria-label="YouTube" className="flex flex-col items-center text-[4px] leading-[5px] font-bold">
            <span className="text-[#222]">You</span>
            <span className="w-[11px] rounded-[1px] bg-[#c22e2e] text-white">Tube</span>
          </button>
        </aside>
      </div>
      <StatusBar />
    </div>
  );
};

export default App;
